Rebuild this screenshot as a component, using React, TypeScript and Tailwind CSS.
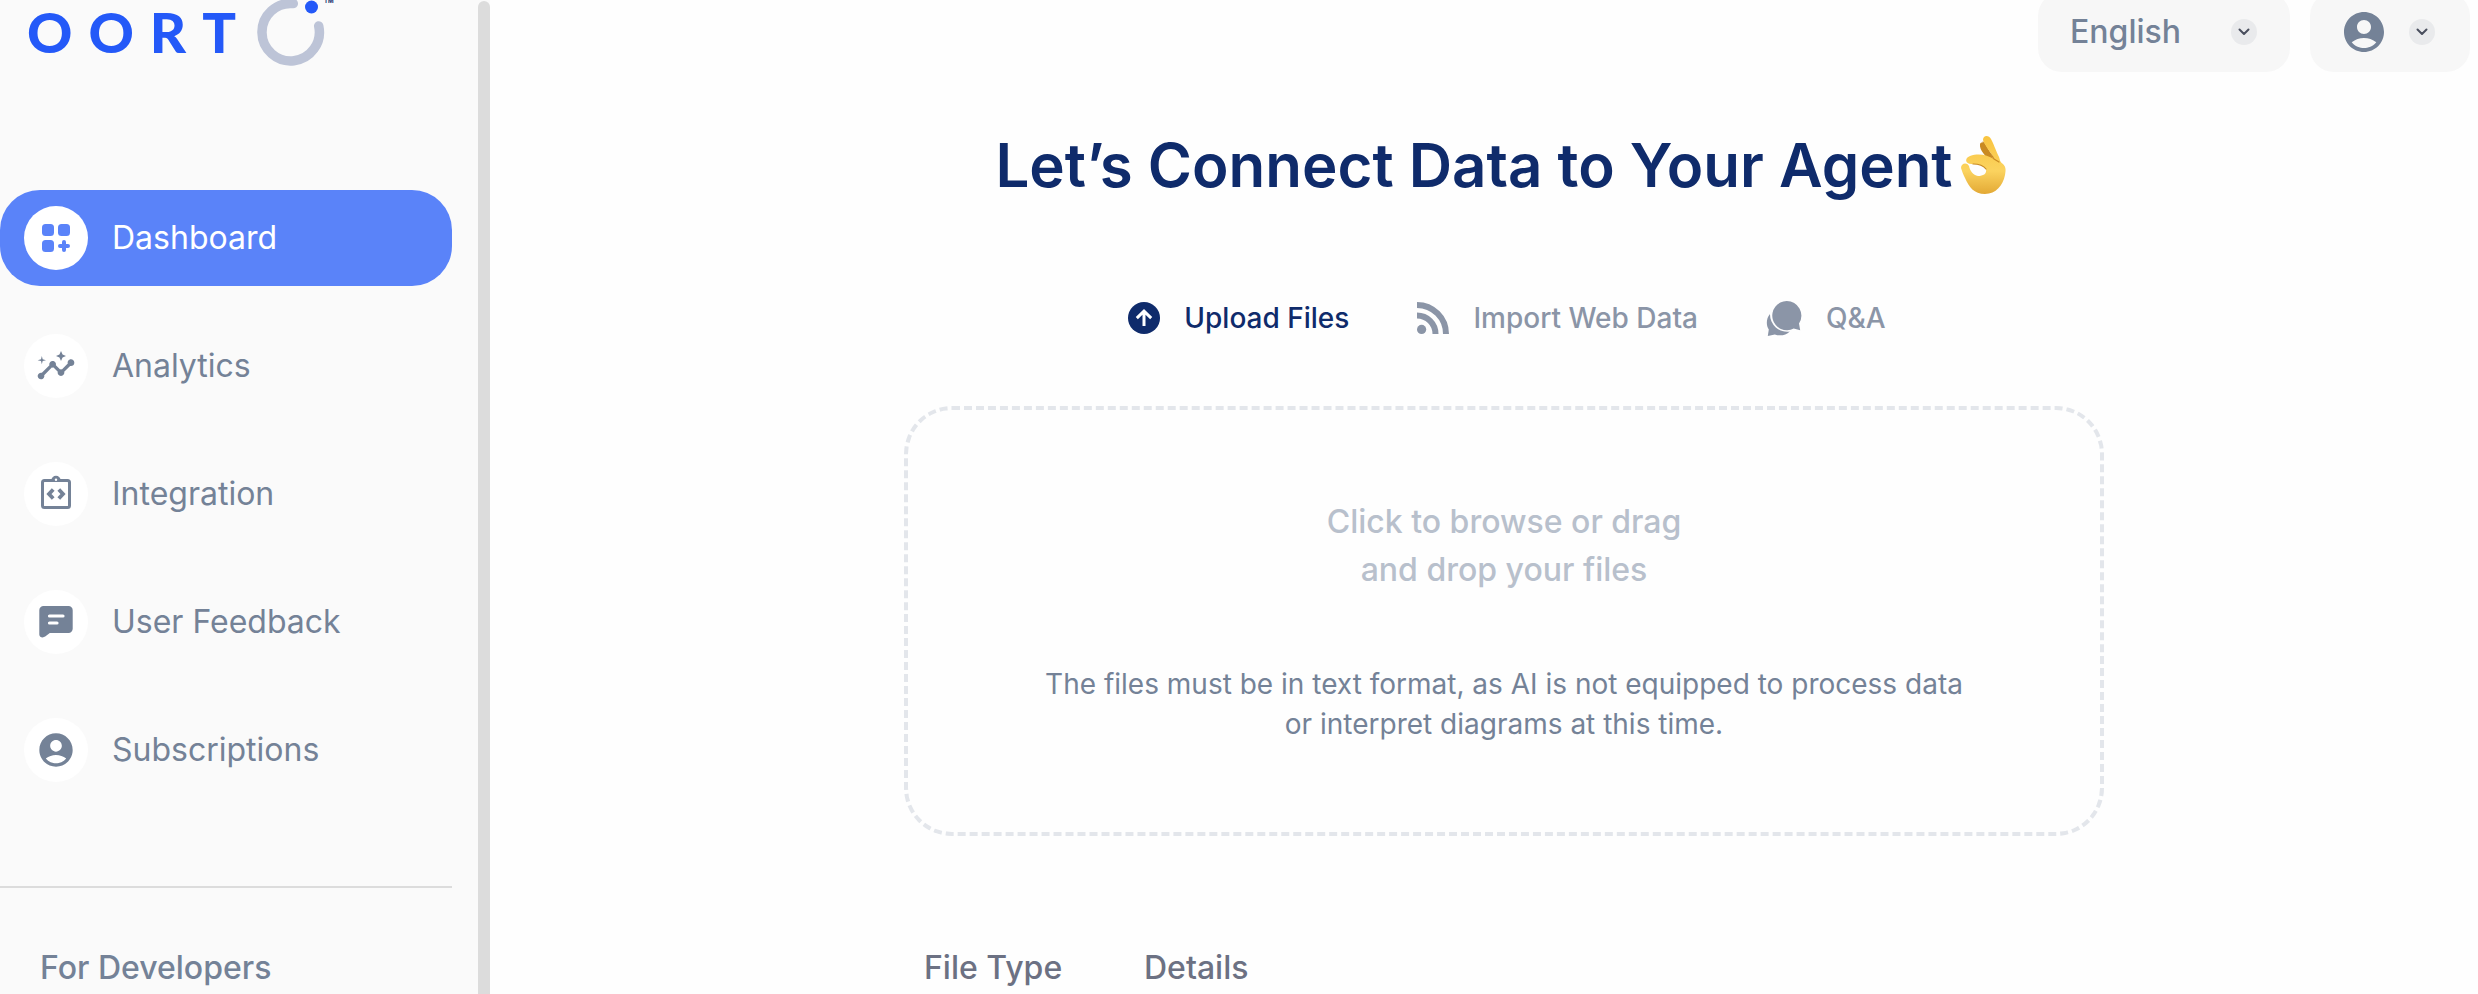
import { MdAccountCircle, MdInsights } from "react-icons/md";
import type { ReactNode } from "react";

function DashboardIcon() {
  return (
    <svg className="size-8" viewBox="0 0 32 32" fill="currentColor" aria-hidden="true">
      <rect x="2" y="2" width="12" height="12" rx="3.5" />
      <rect x="18" y="2" width="12" height="12" rx="3.5" />
      <rect x="2" y="18" width="12" height="12" rx="3.5" />
      <path d="M24 20v8M20 24h8" stroke="currentColor" strokeWidth="4" strokeLinecap="round" />
    </svg>
  );
}

function IntegrationIcon() {
  return (
    <svg className="size-10" viewBox="0 0 40 40" fill="none" stroke="currentColor" strokeWidth="3" aria-hidden="true">
      <rect x="6.500" y="6.500" width="27" height="27" rx="2" />
      <path d="M16 6.500a4 4 0 0 1 8 0" fill="currentColor" strokeWidth="1.500" />
      <circle cx="20" cy="5.800" r="1.200" fill="#fff" stroke="none" />
      <path d="M17.200 15.500L13 20l4.200 4.500M22.800 15.500L27 20l-4.200 4.500" strokeWidth="3.800" />
    </svg>
  );
}

function FeedbackIcon() {
  return (
    <svg className="size-10" viewBox="0 0 40 40" aria-hidden="true">
      <path d="M7.500 4h25a4.200 4.200 0 0 1 4.200 4.200v18.600a4.200 4.200 0 0 1-4.200 4.200H13.800L9.200 34.600C6.700 36.300 3.300 35.200 3.300 32.400V8.200A4.200 4.200 0 0 1 7.500 4z" fill="currentColor" />
      <path d="M13.500 14h13.500M13.500 21h7.500" stroke="#fff" strokeWidth="3.200" strokeLinecap="round" />
    </svg>
  );
}

function UploadIcon() {
  return (
    <svg className="size-8" viewBox="0 0 32 32" aria-hidden="true">
      <circle cx="16" cy="16" r="16" fill="currentColor" />
      <path d="M16 24V10.500M8.800 16.200L16 9.200l7.200 7" fill="none" stroke="#fff" strokeWidth="3" />
    </svg>
  );
}

function FeedIcon() {
  return (
    <svg className="size-8" viewBox="0 0 32 32" fill="none" stroke="currentColor" strokeWidth="6" aria-hidden="true">
      <path d="M0 3a29 29 0 0 1 29 29M0 13.500a18.500 18.500 0 0 1 18.500 18.500" />
      <circle cx="4.600" cy="27.400" r="4.600" fill="currentColor" stroke="none" />
    </svg>
  );
}

function ChatIcon() {
  return (
    <svg className="size-9" viewBox="0 0 36 36" fill="currentColor" aria-hidden="true">
      <path d="M20.700 1a14.600 14.600 0 0 1 12.300 22.400L34.200 30.200l-6.500-1.700A14.600 14.600 0 1 1 20.700 1z" />
      <path d="M4 14C0 18.500 0 25.500 2.800 29.500L1.800 36l7-1.500C14 36.300 20 35.300 23.800 31.500A17.200 17.200 0 0 1 4 14z" />
    </svg>
  );
}

function OkHand() {
  return (
    <svg className="h-[60px] w-[52px]" viewBox="0 0 52 60" aria-label="OK hand" role="img">
      <defs>
        <linearGradient id="skin" x1="0" y1="0" x2="0" y2="1">
          <stop offset="0" stopColor="#f9c440" />
          <stop offset="0.600" stopColor="#fbd35f" />
          <stop offset="1" stopColor="#e3a935" />
        </linearGradient>
      </defs>
      <path d="M19 9c1-2 4-2 6 1l9 17-5 1c-3-7-11-12-10-19z" fill="#c98a22" />
      <path d="M22 5c0-5 6-5 8-1 4 8 5 12 8 18 1 3 1 5 4 7 3 3 3 6 2 11-2 10-9 19-20 19C13 59 8 52 4 43 2 39 1 36 0 33c0-5 6-6 8-2 1 5 4 9 9 10 5 0 9-2 8-7-3-4-8-5-13-5-8 1-9-6-3-8 9-3 17-1 24 3-2-6-9-12-11-19z" fill="url(#skin)" />
      <path d="M25 34c-3-4-8-5-13-5M33 24l5 3M22 7c2 7 8 11 11 17" fill="none" stroke="#c98a22" strokeWidth="1.200" strokeLinecap="round" />
    </svg>
  );
}

function Chevron() {
  return (
    <span className="flex size-[26px] items-center justify-center rounded-full bg-[#e9eaec] text-[#4a4f5e]">
      <svg className="size-3" viewBox="0 0 12 12" fill="none" stroke="currentColor" strokeWidth="2" strokeLinecap="round" strokeLinejoin="round" aria-hidden="true">
        <path d="M1.500 3.500L6 8l4.500-4.500" />
      </svg>
    </span>
  );
}

function Logo() {
  return (
    <a href="#home" aria-label="OORT home" className="flex h-16 items-center justify-between pr-[117px] pl-[27px]">
      <span className="flex gap-4 font-['Lato',sans-serif] text-[56px] leading-[62px] font-black text-[#2459f8]">
        <span>O</span>
        <span>O</span>
        <span>R</span>
        <span>T</span>
      </span>
      <svg className="h-[68px] w-20" viewBox="0 0 80 68" aria-hidden="true">
        <path d="M38.300 5.600A28.700 28.700 0 1 0 63.700 28" fill="none" stroke="#bdc4d7" strokeWidth="9.500" strokeLinecap="round" />
        <circle cx="56.500" cy="9" r="6.500" fill="#2459f8" />
        <text x="69" y="5" fontSize="6" fontWeight="700" fill="#0f2b6b">TM</text>
      </svg>
    </a>
  );
}

const navItems: { label: string; icon: ReactNode; active?: boolean }[] = [
  { label: "Dashboard", icon: <DashboardIcon />, active: true },
  { label: "Analytics", icon: <MdInsights className="size-10" /> },
  { label: "Integration", icon: <IntegrationIcon /> },
  { label: "User Feedback", icon: <FeedbackIcon /> },
  { label: "Subscriptions", icon: <MdAccountCircle className="size-10" /> },
];

function Sidebar() {
  return (
    <aside className="flex w-[490px] shrink-0 bg-[#fafafa]">
      <div className="flex-1 pr-[26px]">
        <Logo />
        <nav aria-label="Main" className="mt-[126px]">
          <ul className="flex flex-col gap-8">
            {navItems.map((item) => (
              <li key={item.label}>
                <a
                  href="#section"
                  aria-current={item.active ? "page" : undefined}
                  className={
                    item.active
                      ? "flex h-24 items-center gap-6 rounded-[40px] bg-[#5a83f9] px-6 text-[32px] text-white"
                      : "flex h-24 items-center gap-6 rounded-[40px] px-6 text-[32px] text-[#748297]"
                  }
                >
                  <span
                    className={
                      item.active
                        ? "flex size-16 items-center justify-center rounded-full bg-white text-[#5a83f9]"
                        : "flex size-16 items-center justify-center rounded-full bg-white"
                    }
                  >
                    {item.icon}
                  </span>
                  {item.label}
                </a>
              </li>
            ))}
          </ul>
        </nav>
        <hr className="mt-[88px] border-t-2 border-[#dcdcdc]" />
        <h2 className="mt-14 pl-10 text-[32px] leading-12 font-medium text-[#748297]">For Developers</h2>
      </div>
      <div className="mt-px w-3 rounded-t-full bg-[#dcdcdc]" />
    </aside>
  );
}

const tabs: { label: string; icon: ReactNode; active?: boolean }[] = [
  { label: "Upload Files", icon: <UploadIcon />, active: true },
  { label: "Import Web Data", icon: <FeedIcon /> },
  { label: "Q&A", icon: <ChatIcon /> },
];

export default function App() {
  return (
    <div className="flex min-h-screen overflow-hidden bg-[#fefefe] font-['Inter',sans-serif]">
      <Sidebar />
      <main className="min-w-0 flex-1">
        <header className="-mt-2 flex justify-end gap-5 pr-2">
          <div className="relative flex items-center">
            <select aria-label="Language" className="h-20 w-[252px] appearance-none rounded-3xl bg-[#f7f7f7] pl-8 text-[32px] font-medium text-[#748297]">
              <option>English</option>
            </select>
            <span className="pointer-events-none absolute right-[33px]">
              <Chevron />
            </span>
          </div>
          <button type="button" aria-label="Account" className="flex h-20 w-40 items-center gap-[21px] rounded-3xl bg-[#f7f7f7] pl-[30px] text-[#748297]">
            <MdAccountCircle className="size-12" />
            <Chevron />
          </button>
        </header>
        <div className="pl-10">
          <h1 className="mt-[59px] flex items-center justify-center gap-2 text-[60px] leading-[68px] font-semibold text-[#0f2b6b]">
            Let’s Connect Data to Your Agent
            <OkHand />
          </h1>
          <div role="tablist" className="mt-[89px] flex h-[60px] items-center justify-center gap-[68px] pl-1.5">
            {tabs.map((tab) => (
              <button
                key={tab.label}
                type="button"
                role="tab"
                aria-selected={Boolean(tab.active)}
                className={
                  tab.active
                    ? "flex items-center gap-6 text-[28px] font-medium text-[#0f2b6b]"
                    : "flex items-center gap-6 text-[28px] font-medium text-[#8b95a7]"
                }
              >
                {tab.icon}
                {tab.label}
              </button>
            ))}
          </div>
          <div className="mx-auto mt-[58px] max-w-[1200px]">
            <button type="button" className="flex h-[430px] w-full flex-col items-center justify-center gap-[70px] rounded-[48px] border-4 border-dashed border-[#e3e6eb]">
              <span className="text-[32px] leading-12 font-medium text-[#b8c0cc]">
                Click to browse or drag
                <br />
                and drop your files
              </span>
              <span className="text-[28px] leading-10 text-[#748297]">
                The files must be in text format, as AI is not equipped to process data
                <br />
                or interpret diagrams at this time.
              </span>
            </button>
            <table className="mt-[108px] w-full table-fixed text-left text-[32px] leading-12 text-[#6c7183]">
              <thead>
                <tr>
                  <th className="w-[220px] pl-5 font-medium">File Type</th>
                  <th className="pl-5 font-medium">Details</th>
                </tr>
              </thead>
            </table>
          </div>
        </div>
      </main>
    </div>
  );
}
